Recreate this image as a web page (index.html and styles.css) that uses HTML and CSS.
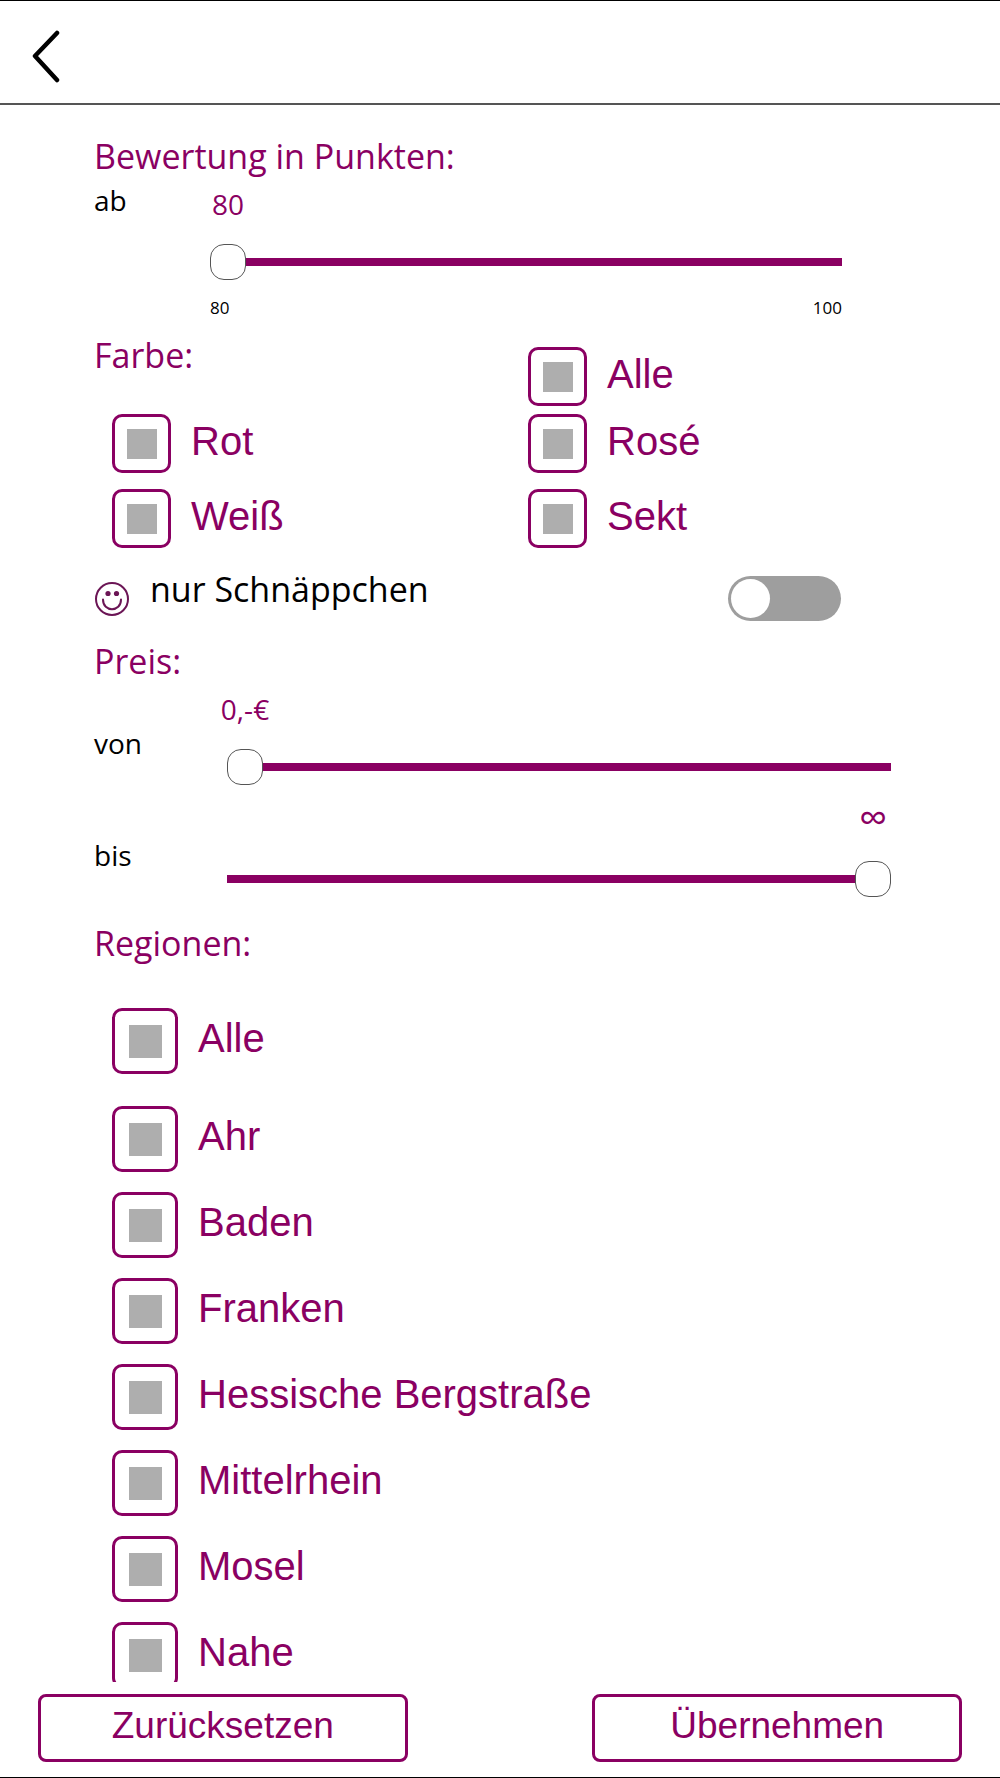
FILE: index.html
```html
<!DOCTYPE html>
<html lang="de">
<head>
    <meta charset="UTF-8">
    <meta name="viewport" content="width=device-width, initial-scale=1.0">
    <title>Filter</title>
    <link rel="stylesheet" href="styles.css">
</head>
<body>

<header>
    <button type="button" class="back-btn" aria-label="Zurück">
        <svg width="30" height="56" viewBox="0 0 30 56" fill="none" stroke="#000" stroke-width="4.500" stroke-linecap="round" stroke-linejoin="round">
            <path d="M26 6 L4 29 L26 53"/>
        </svg>
    </button>
</header>

<form id="filter-form" class="filter">
    <section class="rating">
        <h2>Bewertung in Punkten:</h2>
        <div class="slider-row">
            <label for="points">ab</label>
            <div class="slider">
                <output for="points">80</output>
                <input type="range" id="points" min="80" max="100" value="80">
                <div class="scale"><span>80</span><span>100</span></div>
            </div>
        </div>
    </section>

    <section class="colors">
        <h2>Farbe:</h2>
        <label class="check"><input type="checkbox">Alle</label>
        <label class="check"><input type="checkbox">Rot</label>
        <label class="check"><input type="checkbox">Rosé</label>
        <label class="check last"><input type="checkbox">Weiß</label>
        <label class="check last"><input type="checkbox">Sekt</label>
    </section>

    <section class="bargain">
        <svg class="smiley" width="36" height="36" viewBox="0 0 36 36" fill="none" stroke="#6b1555" stroke-width="2">
            <circle cx="18" cy="18" r="16"/>
            <circle cx="14" cy="12.500" r="2.600" fill="#6b1555" stroke="none"/>
            <circle cx="22.500" cy="12.500" r="2.600" fill="#6b1555" stroke="none"/>
            <path d="M9 18.500 C9 31.500 27 31.500 27 18.500" stroke-linecap="round"/>
        </svg>
        <label for="bargain">nur Schnäppchen</label>
        <input type="checkbox" id="bargain" class="toggle">
    </section>

    <section class="price">
        <h2>Preis:</h2>
        <div class="slider-row">
            <label for="price-from">von</label>
            <div class="slider">
                <output for="price-from">0,-€</output>
                <input type="range" id="price-from" min="0" max="100" value="0">
            </div>
        </div>
        <div class="slider-row">
            <label for="price-to">bis</label>
            <div class="slider">
                <output for="price-to" class="max">∞</output>
                <input type="range" id="price-to" min="0" max="100" value="100">
            </div>
        </div>
    </section>

    <section class="regions">
        <h2>Regionen:</h2>
        <label class="check all"><input type="checkbox">Alle</label>
        <label class="check"><input type="checkbox">Ahr</label>
        <label class="check"><input type="checkbox">Baden</label>
        <label class="check"><input type="checkbox">Franken</label>
        <label class="check"><input type="checkbox">Hessische Bergstraße</label>
        <label class="check"><input type="checkbox">Mittelrhein</label>
        <label class="check"><input type="checkbox">Mosel</label>
        <label class="check"><input type="checkbox">Nahe</label>
    </section>
</form>

<footer>
    <button type="reset" form="filter-form">Zurücksetzen</button>
    <button type="submit" form="filter-form">Übernehmen</button>
</footer>

</body>
</html>
```

FILE: styles.css
```css
* {
    box-sizing: border-box;
}
body {
    display: flex;
    flex-direction: column;
    height: 100vh;
    margin: 0;
    border-top: 1px solid #000;
    border-bottom: 1px solid #000;
    background-color: #fff;
    color: #000;
    font-family: "Open Sans", "Noto Sans", sans-serif;
}
header {
    flex: none;
    padding: 26px 31px 20px;
    border-bottom: 2px solid #555;
}
.back-btn {
    display: block;
    padding: 0;
    border: none;
    background: none;
    cursor: pointer;
}
.back-btn svg {
    display: block;
}
.filter {
    flex: 1;
    min-height: 0;
    overflow-y: auto;
    scrollbar-width: none;
    padding: 29px 94px 0;
}
h2 {
    margin: 0;
    color: #8a0062;
    font-size: 34px;
    font-weight: normal;
    line-height: 44px;
}

/* sliders */
.slider-row {
    display: flex;
    font-size: 28px;
    line-height: 44px;
}
.slider-row label {
    flex: none;
    width: 116px;
}
.slider {
    flex: 1;
}
output {
    display: flex;
    justify-content: center;
    width: 36px;
    margin-bottom: 14px;
    color: #8a0062;
    line-height: 52px;
    white-space: nowrap;
}
output.max {
    margin-left: auto;
    margin-bottom: 22px;
    font-size: 40px;
    line-height: 44px;
}
input[type="range"] {
    -webkit-appearance: none;
    appearance: none;
    display: block;
    width: 100%;
    height: 36px;
    margin: 0;
    background: linear-gradient(#8a0062, #8a0062) center / 100% 8px no-repeat;
}
input[type="range"]::-webkit-slider-thumb {
    -webkit-appearance: none;
    width: 36px;
    height: 36px;
    border: 1px solid #555;
    border-radius: 14px;
    background-color: #fff;
}
.scale {
    display: flex;
    justify-content: space-between;
    margin-top: 16px;
    font-size: 17px;
    line-height: 24px;
}
.rating {
    padding-right: 64px;
}

/* check boxes */
.check {
    display: flex;
    color: #8a0062;
    font-family: "Liberation Sans", Arial, sans-serif;
    font-size: 40px;
    line-height: 54px;
}
.check input {
    -webkit-appearance: none;
    appearance: none;
    flex: none;
    width: 59px;
    height: 59px;
    margin: 0 20px 0 0;
    border: 3px solid #8a0062;
    border-radius: 10px;
    background: linear-gradient(#aeaeae, #aeaeae) center / 30px 30px no-repeat;
}
.check input:checked {
    background-image: linear-gradient(#8a0062, #8a0062);
}
.colors {
    display: grid;
    grid-template-columns: 31fr 27fr;
    row-gap: 8px;
    align-items: end;
    margin-top: 13px;
}
.colors h2 {
    padding-bottom: 29px;
}
.colors .check:nth-of-type(even) {
    padding-left: 18px;
}
.colors .last {
    margin-top: 8px;
}

.bargain {
    display: flex;
    align-items: flex-end;
    gap: 20px;
    margin-top: 19px;
    padding-right: 65px;
    font-size: 34px;
    line-height: 44px;
}
.bargain label {
    flex: 1;
    padding-bottom: 10px;
}
.smiley {
    flex: none;
    margin-bottom: 4px;
}
.toggle {
    -webkit-appearance: none;
    appearance: none;
    flex: none;
    width: 113px;
    height: 45px;
    margin: 0;
    padding: 3px;
    border-radius: 23px;
    background-color: #9e9e9e;
}
.toggle::before {
    content: "";
    display: block;
    width: 39px;
    height: 39px;
    border-radius: 50%;
    background-color: #fff;
}
.toggle:checked {
    background-color: #8a0062;
}
.toggle:checked::before {
    margin-left: auto;
}

.price {
    margin-top: 18px;
    padding-right: 15px;
}
.price .slider-row {
    margin-bottom: 10px;
}
.price label {
    width: 133px;
    padding-top: 38px;
}

.regions {
    margin-top: 24px;
}
.regions h2 {
    margin-bottom: 43px;
}
.regions .check {
    margin: 0 0 20px 18px;
    line-height: 60px;
}
.regions .check input {
    width: 66px;
    height: 66px;
    background-size: 33px 33px;
}
.regions .all {
    margin-bottom: 32px;
}

footer {
    flex: none;
    display: flex;
    justify-content: space-between;
    padding: 12px 38px 15px;
}
footer button {
    width: 40%;
    height: 68px;
    padding: 0 0 4px;
    border: 3px solid #8a0062;
    border-radius: 8px;
    background-color: #fff;
    color: #8a0062;
    font-family: "Liberation Sans", Arial, sans-serif;
    font-size: 37px;
    cursor: pointer;
}
```
